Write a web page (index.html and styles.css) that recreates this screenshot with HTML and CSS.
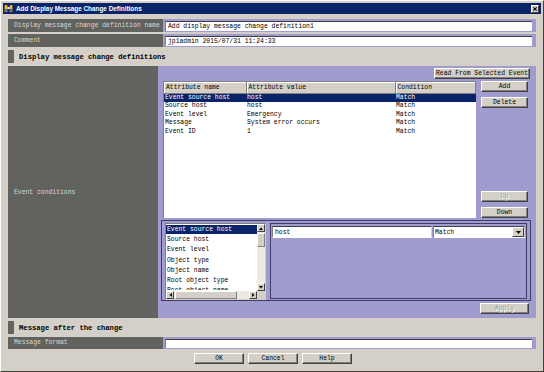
FILE: index.html
```html
<!DOCTYPE html>
<html lang="en">
<head>
  <meta charset="UTF-8" />
  <title>Add Display Message Change Definitions</title>
  <link rel="stylesheet" href="styles.css">
</head>
<body>
  <div class="window">
    <div class="titlebar">
      <svg class="title-icon" width="9" height="9" viewBox="0 0 9 9">
        <rect x="0.5" y="1" width="3" height="7" fill="#e8c040" stroke="#5a4a10" stroke-width="0.6"/>
        <rect x="5.5" y="1" width="3" height="7" fill="#e8c040" stroke="#5a4a10" stroke-width="0.6"/>
        <rect x="3.5" y="3" width="2" height="2" fill="#ffffff"/>
        <rect x="1" y="5" width="2" height="2.5" fill="#4a6ab8"/>
        <rect x="6" y="5" width="2" height="2.5" fill="#4a6ab8"/>
      </svg>
      <span class="title">Add Display Message Change Definitions</span>
      <span class="close">
        <svg width="7" height="6" viewBox="0 0 7 6">
          <path d="M1.5 1 L5.5 5 M5.5 1 L1.5 5" stroke="#000" stroke-width="1.2"/>
        </svg>
      </span>
    </div>

    <div class="content">
      <div class="row">
        <div class="label">Display message change definition name</div>
        <div class="field"><input type="text" value="Add display message change definition1"></div>
      </div>
      <div class="row">
        <div class="label">Comment</div>
        <div class="field"><input type="text" value="jp1admin 2015/07/31 11:24:33"></div>
      </div>

      <div class="section"><span class="section-bar"></span>Display message change definitions</div>

      <div class="event-block">
        <div class="event-label">Event conditions</div>
        <div class="event-area">
          <div class="read-row"><button class="btn read-btn">Read From Selected Event</button></div>

          <div class="conditions">
            <div class="table-box">
              <table class="cond-table">
                <thead>
                  <tr><th class="col-name">Attribute name</th><th class="col-value">Attribute value</th><th>Condition</th></tr>
                </thead>
                <tbody>
                  <tr class="selected"><td>Event source host</td><td>host</td><td>Match</td></tr>
                  <tr><td>Source host</td><td>host</td><td>Match</td></tr>
                  <tr><td>Event level</td><td>Emergency</td><td>Match</td></tr>
                  <tr><td>Message</td><td>System error occurs</td><td>Match</td></tr>
                  <tr><td>Event ID</td><td>1</td><td>Match</td></tr>
                </tbody>
              </table>
            </div>
            <div class="side-buttons">
              <button class="btn">Add</button>
              <button class="btn">Delete</button>
              <button class="btn disabled up-btn">Up</button>
              <button class="btn">Down</button>
            </div>
          </div>

          <div class="group">
            <div class="listbox">
              <div class="list-main">
                <ul class="list-items">
                  <li class="selected">Event source host</li>
                  <li>Source host</li>
                  <li>Event level</li>
                  <li>Object type</li>
                  <li>Object name</li>
                  <li>Root object type</li>
                  <li class="partial">Root object name</li>
                </ul>
                <div class="vscroll">
                  <span class="sb-btn"><svg width="4" height="3" viewBox="0 0 4 3"><path d="M0 3 L2 0.5 L4 3 Z" fill="#000"/></svg></span>
                  <span class="vthumb"></span>
                  <span class="sb-fill"></span>
                  <span class="sb-btn"><svg width="4" height="3" viewBox="0 0 4 3"><path d="M0 0 L2 2.5 L4 0 Z" fill="#000"/></svg></span>
                </div>
              </div>
              <div class="list-bottom">
                <div class="hscroll">
                  <span class="sb-btn"><svg width="3" height="4" viewBox="0 0 3 4"><path d="M3 0 L0.5 2 L3 4 Z" fill="#000"/></svg></span>
                  <span class="hthumb"></span>
                  <span class="sb-fill"></span>
                  <span class="sb-btn"><svg width="3" height="4" viewBox="0 0 3 4"><path d="M0 0 L2.5 2 L0 4 Z" fill="#000"/></svg></span>
                </div>
                <span class="corner"></span>
              </div>
            </div>
            <div class="edit-panel">
              <input type="text" class="value-input" value="host">
              <div class="select">
                <span>Match</span>
                <span class="select-arrow"><svg width="5" height="3" viewBox="0 0 5 3"><path d="M0 0 L2.5 3 L5 0 Z" fill="#000"/></svg></span>
              </div>
            </div>
          </div>

          <div class="apply-row"><button class="btn disabled">Apply</button></div>
        </div>
      </div>

      <div class="section"><span class="section-bar"></span>Message after the change</div>

      <div class="row row-msg">
        <div class="label">Message format</div>
        <div class="field"><input type="text" value=""></div>
      </div>

      <div class="dialog-buttons">
        <button class="btn">OK</button>
        <button class="btn">Cancel</button>
        <button class="btn">Help</button>
      </div>
    </div>
  </div>
</body>
</html>
```

FILE: styles.css
```css
* {
  box-sizing: border-box;
}

body {
  margin: 0;
  padding: 0;
  background: #d4d0c8;
  font-family: "Liberation Mono", "Courier New", monospace;
  font-size: 6.4px;
}

.window {
  width: 544px;
  height: 372px;
  background: #d4d0c8;
  border-top: 1px solid #ffffff;
  border-left: 1px solid #ffffff;
  border-right: 1px solid #404040;
  border-bottom: 1px solid #404040;
  padding: 2px;
  display: flex;
  flex-direction: column;
}

.titlebar {
  height: 11px;
  background: #0a246a;
  display: flex;
  align-items: center;
  padding: 0 2px 0 1px;
}

.title-icon {
  display: block;
  margin-right: 3px;
}

.title {
  font-family: "Liberation Sans", Arial, sans-serif;
  font-weight: bold;
  font-size: 6.4px;
  color: #ffffff;
  flex: 1;
}

.close {
  width: 8px;
  height: 8px;
  background: #d4d0c8;
  border-top: 1px solid #ffffff;
  border-left: 1px solid #ffffff;
  border-right: 1px solid #404040;
  border-bottom: 1px solid #404040;
  display: flex;
  align-items: center;
  justify-content: center;
}

.content {
  flex: 1;
  display: flex;
  flex-direction: column;
  padding: 5px 5px 0 5px;
}

.row {
  display: flex;
  height: 13px;
  margin-bottom: 2px;
}

.label {
  width: 155px;
  background: #62625e;
  color: #d8d8d4;
  padding-left: 6px;
  line-height: 13px;
  white-space: nowrap;
}

.field {
  flex: 1;
  background: #a09cd0;
  padding: 2px 4px 1px 2px;
}

.field input {
  width: 100%;
  height: 100%;
  display: block;
  margin: 0;
  padding: 0 0 0 2px;
  font-family: inherit;
  font-size: 6.4px;
  color: #000;
  background: #ffffff;
  border: none;
  border-top: 1px solid #404040;
  border-left: 1px solid #808080;
  outline: none;
}

.section {
  display: flex;
  align-items: center;
  height: 13px;
  margin-top: 1px;
  margin-bottom: 3px;
  font-weight: bold;
  font-size: 7.2px;
  color: #000;
}

.section-bar {
  width: 6px;
  height: 13px;
  background: #62625e;
  margin-right: 5px;
}

.event-block {
  display: flex;
  height: 252px;
  margin-bottom: 2px;
}

.event-label {
  width: 152px;
  background: #62625e;
  color: #d8d8d4;
  padding-left: 6px;
  display: flex;
  align-items: center;
}

.event-area {
  flex: 1;
  background: #a09cd0;
  padding: 2px 5px 4px 3px;
  display: flex;
  flex-direction: column;
}

.btn {
  height: 11px;
  margin: 0;
  padding: 0;
  font-family: "Liberation Mono", "Courier New", monospace;
  font-size: 6.4px;
  color: #000;
  background: #d4d0c8;
  border-top: 1px solid #ffffff;
  border-left: 1px solid #ffffff;
  border-right: 1px solid #404040;
  border-bottom: 1px solid #404040;
  box-shadow: inset -1px -1px 0 #808080;
  line-height: 9px;
}

.btn.disabled {
  color: #a09c98;
  text-shadow: 1px 1px 0 #ffffff;
}

.read-row {
  display: flex;
  justify-content: flex-end;
  padding-right: 1px;
}

.read-btn {
  width: 96px;
  white-space: nowrap;
}

.conditions {
  display: flex;
  height: 137px;
  margin-top: 2px;
}

.table-box {
  width: 313px;
  margin-left: 2px;
  background: #ffffff;
  border-top: 1px solid #808080;
  border-left: 1px solid #808080;
}

.cond-table {
  width: 100%;
  border-collapse: collapse;
  table-layout: fixed;
  font-size: 6.4px;
}

.cond-table th {
  height: 11px;
  padding: 0 0 0 2px;
  text-align: left;
  font-weight: normal;
  background: #d4d0c8;
  border-right: 1px solid #808080;
  border-bottom: 1px solid #808080;
  box-shadow: inset 1px 1px 0 #ffffff;
}

.col-name {
  width: 82px;
}

.col-value {
  width: 149px;
}

.cond-table td {
  height: 8.5px;
  padding: 0 0 0 1px;
  line-height: 8.5px;
  white-space: nowrap;
  overflow: hidden;
}

.cond-table tr.selected td {
  background: #0a246a;
  color: #ffffff;
}

.side-buttons {
  width: 47px;
  margin-left: 5px;
  display: flex;
  flex-direction: column;
  gap: 5px;
}

.up-btn {
  margin-top: auto;
}

.group {
  height: 81px;
  margin-top: 2px;
  border: 1px solid #3e3c66;
  padding: 2px 3px 1px 3px;
  display: flex;
  gap: 4px;
}

.listbox {
  width: 101px;
  height: 77px;
  border-top: 1px solid #808080;
  border-left: 1px solid #808080;
  border-right: 1px solid #d4d0c8;
  border-bottom: 1px solid #d4d0c8;
  background: #ffffff;
  display: flex;
  flex-direction: column;
}

.list-main {
  flex: 1;
  display: flex;
  min-height: 0;
}

.list-items {
  flex: 1;
  margin: 0;
  padding: 1px 0 0 0;
  list-style: none;
  overflow: hidden;
}

.list-items li {
  height: 10.2px;
  line-height: 9px;
  padding-left: 1px;
  white-space: nowrap;
}

.list-items li.partial {
  height: 4px;
  overflow: hidden;
}

.list-items li.selected {
  background: linear-gradient(#0a246a 0, #0a246a 9px, transparent 9px);
  color: #ffffff;
}

.vscroll {
  width: 8px;
  display: flex;
  flex-direction: column;
  background: #ece9e2;
}

.hscroll {
  flex: 1;
  height: 8px;
  display: flex;
  background: #ece9e2;
}

.list-bottom {
  display: flex;
  height: 8px;
}

.corner {
  width: 8px;
  height: 8px;
  background: #d4d0c8;
}

.sb-btn {
  width: 8px;
  height: 8px;
  flex: none;
  background: #d4d0c8;
  border-top: 1px solid #ffffff;
  border-left: 1px solid #ffffff;
  border-right: 1px solid #404040;
  border-bottom: 1px solid #404040;
  display: flex;
  align-items: center;
  justify-content: center;
}

.sb-btn svg {
  display: block;
}

.sb-fill {
  flex: 1;
}

.vthumb {
  height: 14px;
  margin-top: 1px;
  background: #d4d0c8;
  border-top: 1px solid #ffffff;
  border-left: 1px solid #ffffff;
  border-right: 1px solid #808080;
  border-bottom: 1px solid #808080;
}

.hthumb {
  width: 62px;
  margin-left: 1px;
  background: #d4d0c8;
  border-top: 1px solid #ffffff;
  border-left: 1px solid #ffffff;
  border-right: 1px solid #808080;
  border-bottom: 1px solid #808080;
}

.edit-panel {
  flex: 1;
  height: 76px;
  border: 1px solid #3e3c66;
  padding: 2px 1px 0 1px;
  display: flex;
  align-items: flex-start;
}

.value-input {
  width: 160px;
  height: 12px;
  margin: 0;
  padding: 0 0 0 2px;
  font-family: inherit;
  font-size: 6.4px;
  background: #ffffff;
  border: none;
  border-top: 1px solid #404040;
  border-left: 1px solid #808080;
  border-right: 1px solid #d4d0c8;
  border-bottom: 1px solid #ffffff;
  outline: none;
}

.select {
  width: 92px;
  height: 12px;
  margin-left: 1px;
  background: #ffffff;
  border-top: 1px solid #404040;
  border-left: 1px solid #808080;
  border-right: 1px solid #d4d0c8;
  border-bottom: 1px solid #ffffff;
  display: flex;
  align-items: center;
  justify-content: space-between;
  padding-left: 1px;
}

.select-arrow {
  width: 12px;
  height: 10px;
  background: #d4d0c8;
  border-top: 1px solid #ffffff;
  border-left: 1px solid #ffffff;
  border-right: 1px solid #404040;
  border-bottom: 1px solid #404040;
  display: flex;
  align-items: center;
  justify-content: center;
}

.apply-row {
  display: flex;
  justify-content: flex-end;
  margin-top: 2px;
  padding-right: 2px;
}

.apply-row .btn {
  width: 49px;
}

.row-msg {
  height: 12px;
  margin-top: 0;
}

.row-msg .label {
  line-height: 12px;
}

.dialog-buttons {
  display: flex;
  justify-content: center;
  gap: 4px;
  margin-top: 2px;
  padding-left: 2px;
}

.dialog-buttons .btn {
  width: 50px;
}
```
